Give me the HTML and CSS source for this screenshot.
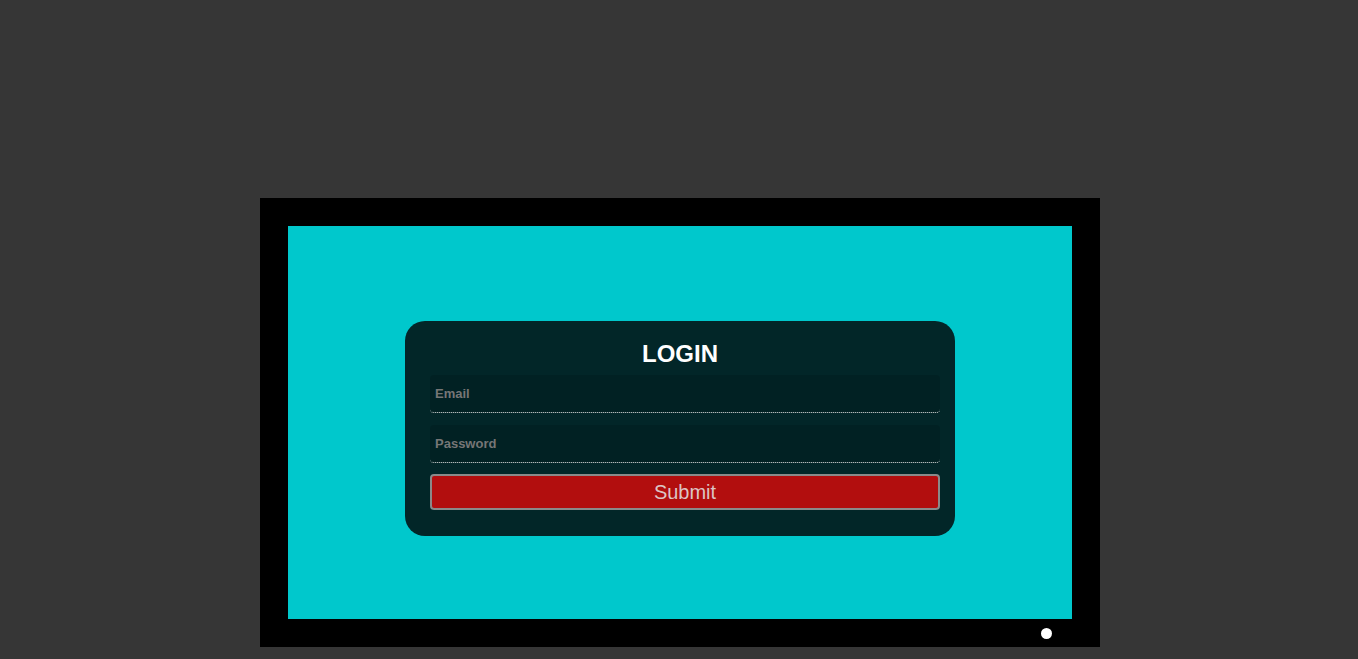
FILE: index.html
```html
<!DOCTYPE html>
<html>
<head>
<meta charset="utf-8">
<link rel="stylesheet" href="styles.css">
</head>
<body>
<div class="monitor">
  <div class="screen">
    <form class="card">
      <h2 class="title">LOGIN</h2>
      <input class="field" type="text" placeholder="Email">
      <input class="field" type="password" placeholder="Password">
      <button class="submit" type="button">Submit</button>
    </form>
  </div>
  <div class="bezel">
    <span class="dot"></span>
  </div>
</div>
</body>
</html>
```
FILE: styles.css
```css
html, body {
  margin: 0;
  padding: 0;
  background: #363636;
  height: 100%;
  overflow: hidden;
}
body {
  padding-top: 198px;
  box-sizing: border-box;
  font-family: "Liberation Sans", Arial, sans-serif;
}
.monitor {
  width: 840px;
  margin: 0 auto;
  background: #000;
  padding: 28px 28px 0;
  box-sizing: border-box;
  position: relative;
  left: 1px;
}
.screen {
  height: 393px;
  background: #00c8cc;
  display: flex;
  align-items: center;
  justify-content: center;
}
.card {
  width: 550px;
  height: 215px;
  margin-top: 12px;
  box-sizing: border-box;
  background: #022628;
  border-radius: 20px;
  padding: 20px 15px 0 25px;
  display: flex;
  flex-direction: column;
}
.title {
  margin: 0 10px 8px 0;
  text-align: center;
  color: #fff;
  font-size: 24px;
  line-height: 26px;
  font-weight: bold;
}
.field {
  height: 38px;
  box-sizing: border-box;
  background: #012123;
  border: none;
  border-bottom: 1px dotted #e8e8e8;
  border-radius: 4px;
  padding: 0 5px;
  margin: 0 0 12px;
  font-family: "Liberation Sans", Arial, sans-serif;
  font-size: 13px;
  font-weight: bold;
  color: #ddd;
  outline: none;
}
.field::placeholder {
  color: #767676;
}
.field + .field {
  margin-bottom: 11px;
}
.submit {
  height: 36px;
  box-sizing: border-box;
  background: #b20e0e;
  border: 2px solid #8a8a8a;
  border-radius: 4px;
  color: #dcc4c4;
  font-family: "Liberation Sans", Arial, sans-serif;
  font-size: 20px;
  padding: 0;
}
.bezel {
  height: 28px;
  display: flex;
  align-items: center;
  justify-content: flex-end;
  padding-right: 20px;
}
.dot {
  width: 11px;
  height: 11px;
  border-radius: 50%;
  background: #fff;
}
```
